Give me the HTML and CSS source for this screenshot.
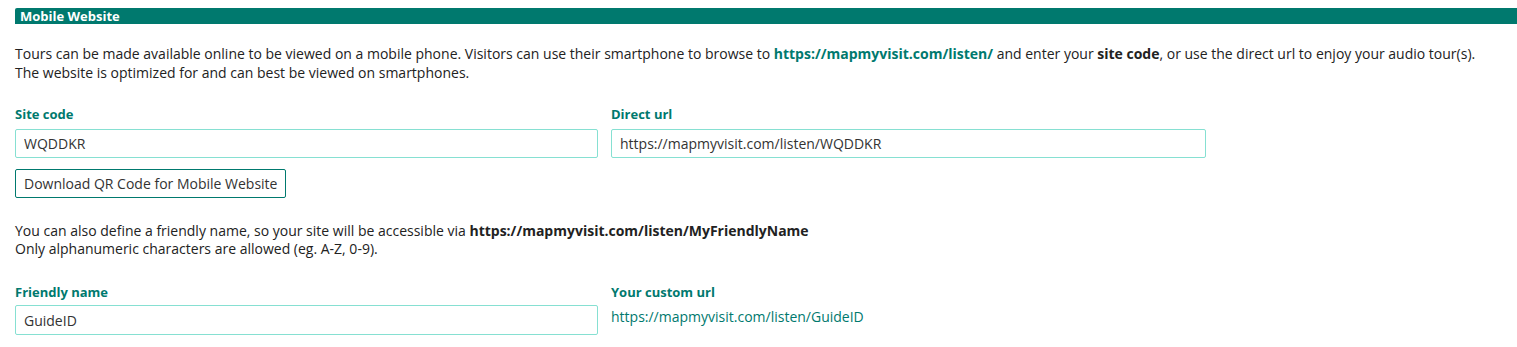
FILE: index.html
```html
<!DOCTYPE html>
<html>
<head>
<meta charset="utf-8">
<link rel="stylesheet" href="styles.css">
</head>
<body>
<div class="panel">
  <div class="panel-title">Mobile Website</div>
  <p class="intro">Tours can be made available online to be viewed on a mobile phone. Visitors can use their smartphone to browse to <a class="link" href="#">https://mapmyvisit.com/listen/</a> and enter your <b>site code</b>, or use the direct url to enjoy your audio tour(s).<br>The website is optimized for and can best be viewed on smartphones.</p>
  <div class="row">
    <div class="field">
      <label class="label">Site code</label>
      <input class="input" type="text" value="WQDDKR">
    </div>
    <div class="field">
      <label class="label">Direct url</label>
      <input class="input" type="text" value="https://mapmyvisit.com/listen/WQDDKR">
    </div>
  </div>
  <button class="btn">Download QR Code for Mobile Website</button>
  <p class="intro friendly">You can also define a friendly name, so your site will be accessible via <b>https://mapmyvisit.com/listen/MyFriendlyName</b><br>Only alphanumeric characters are allowed (eg. A-Z, 0-9).</p>
  <div class="row row2">
    <div class="field">
      <label class="label">Friendly name</label>
      <input class="input" type="text" value="GuideID">
    </div>
    <div class="field">
      <label class="label">Your custom url</label>
      <div class="custom-url">https://mapmyvisit.com/listen/GuideID</div>
    </div>
  </div>
</div>
</body>
</html>
```
FILE: styles.css
```css
html, body {
  margin: 0;
  padding: 0;
  background: #fff;
}
body {
  font-family: "Open Sans", "Noto Sans", sans-serif;
  font-size: 14px;
  color: #222;
}
.panel {
  padding: 8px 0 0 15px;
}
.panel-title {
  background: #00796e;
  color: #fff;
  font-weight: 700;
  font-size: 13px;
  line-height: 16px;
  height: 16px;
  padding-left: 5px;
  border-top-left-radius: 2px;
}
.intro {
  margin: 20px 0 0 0;
  line-height: 19px;
}
.intro b {
  font-weight: 700;
}
.link {
  color: #00796e;
  font-weight: 700;
  text-decoration: none;
}
.row {
  display: flex;
  gap: 13px;
  margin-top: 23px;
}
.field {
  display: flex;
  flex-direction: column;
  width: 583px;
}
.field + .field {
  width: 595px;
}
.label {
  color: #00796e;
  font-weight: 700;
  font-size: 13px;
  line-height: 18px;
  margin-bottom: 6px;
}
.input {
  box-sizing: border-box;
  height: 29px;
  border: 1px solid #86e0d2;
  border-radius: 2px;
  padding: 0 8px;
  font-family: inherit;
  font-size: 14px;
  color: #333;
  outline: none;
}
.btn {
  display: block;
  margin-top: 11px;
  box-sizing: border-box;
  height: 29px;
  padding: 0 8px;
  background: #fff;
  border: 1px solid #00796e;
  border-radius: 2px;
  font-family: inherit;
  font-size: 14px;
  color: #333;
}
.friendly {
  margin-top: 24px;
  line-height: 18px;
}
.row2 {
  margin-top: 25px;
}
.row2 .label {
  margin-bottom: 4px;
}
.row2 .input {
  height: 30px;
}
.custom-url {
  color: #00796e;
  line-height: 20px;
  margin-top: 2px;
}
```
